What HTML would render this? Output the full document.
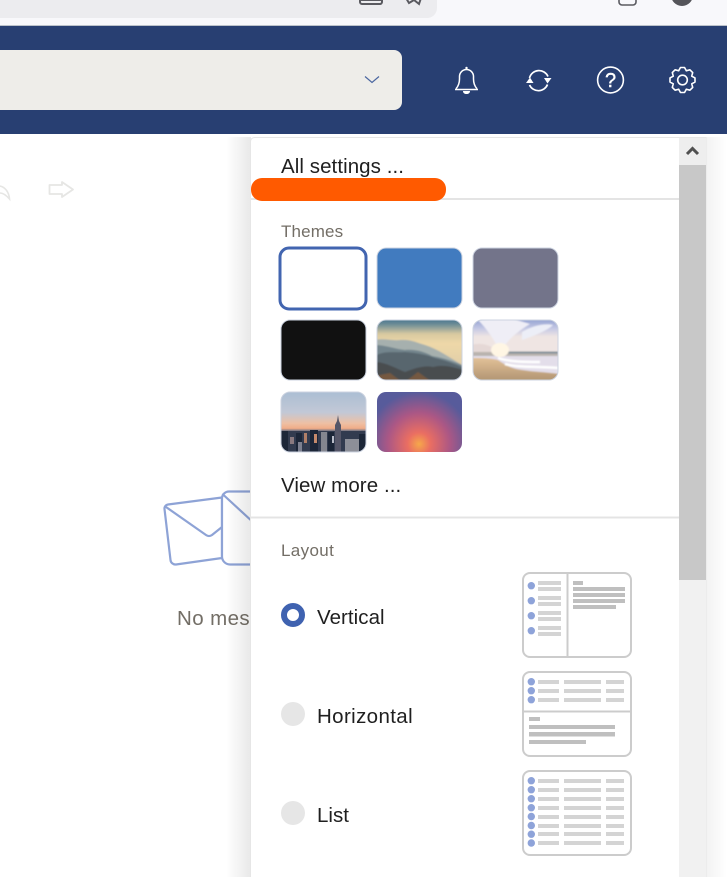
<!DOCTYPE html>
<html lang="en">
<head>
<meta charset="utf-8">
<title>Settings panel</title>
<style>
html,body{margin:0;padding:0;background:#fff;}
body{width:727px;height:877px;position:relative;overflow:hidden;font-family:"Liberation Sans",sans-serif;}
svg.g{position:absolute;left:0;top:0;}
.t{position:absolute;white-space:nowrap;line-height:24px;height:24px;}
.m{font-size:20.5px;color:#1f1f1f;}
.h{font-size:17px;color:#736e66;}
</style>
</head>
<body>
<div class="t" style="left:177px;top:607px;font-size:20.5px;color:#736e66;width:73px;overflow:hidden;letter-spacing:.4px;">No messages</div>
<svg class="g" width="727" height="877" viewBox="0 0 727 877" xmlns="http://www.w3.org/2000/svg">
<defs>
<filter id="b" x="-5%" y="-5%" width="110%" height="110%"><feGaussianBlur stdDeviation=".7"/></filter>
<filter id="s" x="-2%" y="-2%" width="104%" height="104%"><feGaussianBlur stdDeviation=".35"/></filter>
<linearGradient id="shadow" x1="0" x2="1" y1="0" y2="0"><stop offset="0" stop-color="#000" stop-opacity="0"/><stop offset="1" stop-color="#000" stop-opacity=".09"/></linearGradient>
<linearGradient id="shadowR" x1="0" x2="1" y1="0" y2="0"><stop offset="0" stop-color="#000" stop-opacity=".05"/><stop offset="1" stop-color="#000" stop-opacity="0"/></linearGradient>
<linearGradient id="mtn" x1="0" x2="0" y1="0" y2="1"><stop offset="0" stop-color="#3f6f8c"/><stop offset=".1" stop-color="#6d8c96"/><stop offset=".25" stop-color="#d8c9a0"/><stop offset=".4" stop-color="#eed8a8"/><stop offset=".7" stop-color="#e2cfa8"/><stop offset="1" stop-color="#b9bcb0"/></linearGradient>
<linearGradient id="beachSky" x1="0" x2="0" y1="0" y2="1"><stop offset="0" stop-color="#8d9dd0"/><stop offset=".3" stop-color="#c6c9e4"/><stop offset=".52" stop-color="#efe5e3"/></linearGradient>
<linearGradient id="sand" x1="0" x2="0" y1="0" y2="1"><stop offset="0" stop-color="#e6c49a"/><stop offset="1" stop-color="#ae9270"/></linearGradient>
<linearGradient id="city" x1="0" x2="0" y1="0" y2="1"><stop offset="0" stop-color="#a9bdd3"/><stop offset=".35" stop-color="#c2c8d6"/><stop offset=".52" stop-color="#eec0a4"/><stop offset=".6" stop-color="#f0ac88"/><stop offset=".64" stop-color="#6f7486"/><stop offset="1" stop-color="#1d2338"/></linearGradient>
<radialGradient id="glow" gradientUnits="userSpaceOnUse" cx="419" cy="444" r="52"><stop offset="0" stop-color="#f6a84a"/><stop offset=".22" stop-color="#ea6e62"/><stop offset=".6" stop-color="#ab5785"/><stop offset="1" stop-color="#575b9b"/></radialGradient>
<clipPath id="c1"><rect x="377" y="320" width="85" height="60" rx="9"/></clipPath>
<clipPath id="c2"><rect x="473" y="320" width="85" height="60" rx="9"/></clipPath>
<clipPath id="c3"><rect x="281" y="392" width="85" height="60" rx="9"/></clipPath>
</defs>

<!-- browser chrome -->
<rect x="0" y="0" width="727" height="25" fill="#f8f8fb"/>
<rect x="0" y="25" width="727" height="1" fill="#bcc2ca"/>
<path d="M0 0H437V8a10 10 0 0 1-10 10H0z" fill="#ececef"/>
<path d="M360 -3V2a2 2 0 0 0 2 2h18a2 2 0 0 0 2-2V-3M360 0H382" fill="none" stroke="#5a5a60" stroke-width="2"/>
<path d="M406 -2L409 3 L414 0 L419 4 L421 -2" fill="none" stroke="#5a5a60" stroke-width="2"/>
<path d="M619 -3V2a3 3 0 0 0 3 3h11a3 3 0 0 0 3-3V-3" fill="none" stroke="#5a5a60" stroke-width="1.6"/>
<circle cx="682" cy="-5" r="11" fill="#55555a"/>

<!-- header -->
<rect x="0" y="26" width="727" height="108" fill="#283f72"/>
<path d="M0 50H394a8 8 0 0 1 8 8V102a8 8 0 0 1-8 8H0z" fill="#eeede9"/>
<path d="M365 76.500L372 82.500L379 76.500" fill="none" stroke="#4a66a0" stroke-width="1.200"/>

<!-- bell -->
<path d="M456 88.800C458.500 86 459.500 83 459.500 79V76.500a7 7 0 0 1 14 0V79C473.500 83 474.500 86 477 88.800" fill="none" stroke="#fff" stroke-width="1.500" stroke-linejoin="round"/>
<path d="M455 89.500H478" stroke="#fff" stroke-width="1.400"/>
<path d="M463 91h7c0 2-1.500 3-3.500 3s-3.500-1-3.500-3z" fill="#fff"/>
<circle cx="466.500" cy="68" r="1.200" fill="#fff"/>

<!-- refresh -->
<path d="M529.500 78a9.800 9.800 0 0 1 18.500-1.500M547.500 84.500a9.800 9.800 0 0 1-18 .5" fill="none" stroke="#fff" stroke-width="1.700"/>
<path d="M526 83L530 77.500L533.500 83z" fill="#fff"/>
<path d="M544 78L551.500 78L547.500 83.500z" fill="#fff"/>

<!-- help -->
<circle cx="610.500" cy="80" r="12.900" fill="none" stroke="#fff" stroke-width="1.600"/>
<text x="610.500" y="87" font-family="Liberation Sans, sans-serif" font-size="20" fill="#fff" stroke="#fff" stroke-width=".4" text-anchor="middle">?</text>

<!-- gear -->
<g transform="translate(682.500 80)" fill="none" stroke="#fff" stroke-width="1.600" stroke-linejoin="round">
<path d="M-2.030 -12.500L2.030 -12.500L3.830 -9.240L7.400 -10.200L10.200 -7.400L9.240 -3.830L12.500 -2.030L12.500 2.030L9.240 3.830L10.200 7.400L7.400 10.200L3.830 9.240L2.030 12.500L-2.030 12.500L-3.830 9.240L-7.400 10.200L-10.200 7.400L-9.240 3.830L-12.500 2.030L-12.500 -2.030L-9.240 -3.830L-10.200 -7.400L-7.400 -10.200L-3.830 -9.240z"/>
<circle r="4.800"/>
</g>

<!-- toolbar arrows, mostly hidden -->
<path d="M0 186C5 187 9 192 9.500 199C6 195 3 193 0 193" fill="none" stroke="#e6e6e4" stroke-width="1.600"/>
<path d="M49.500 185H62V182L73 189.500L62 197V194H49.500z" fill="none" stroke="#e6e6e4" stroke-width="1.800" stroke-linejoin="round"/>

<!-- envelopes -->
<g fill="none" stroke="#8ea3d6" stroke-width="2.200" stroke-linejoin="round" stroke-linecap="round">
<path d="M168 504.500L222 497.500V558L176 564.500a5 5 0 0 1-5.500-4.500L164.500 509a4 4 0 0 1 3.500-4.500z" fill="#fff"/>
<path d="M166 507L206 535a5 5 0 0 0 6 0L222 527"/>
<path d="M229 491.500H260V564.500H230a8 8 0 0 1-8-8V498.500a7 7 0 0 1 7-7z" fill="#fff"/>
<path d="M223 494.500L255 524"/>
</g>

<!-- panel shadow and body -->
<rect x="226" y="137" width="25" height="740" fill="url(#shadow)"/>
<rect x="706" y="137" width="21" height="740" fill="url(#shadowR)"/>
<path d="M250.500 885V141.500a4 4 0 0 1 4-4H706V885z" fill="#fff" stroke="#e6e6e6"/>

<!-- scrollbar -->
<rect x="679" y="138" width="27" height="739" fill="#f1f1f1"/>
<rect x="679" y="138" width="27" height="27" fill="#eeeeee"/>
<rect x="679" y="165" width="27" height="415" fill="#c8c8c8"/>
<path d="M687 154L692.500 148.500L698 154" fill="none" stroke="#505050" stroke-width="3"/>

<!-- dividers -->
<rect x="251" y="198" width="428" height="2" fill="#e4e4e4"/>
<rect x="251" y="516.500" width="428" height="2" fill="#e4e4e4"/>

<!-- orange marker -->
<rect x="251" y="178" width="195" height="23" rx="11" fill="#ff5a00"/>

<!-- theme tiles row 1 -->
<rect x="280" y="248" width="86" height="61" rx="9" fill="#fff" stroke="#4265b0" stroke-width="3"/>
<rect x="377" y="248" width="85" height="60" rx="9" fill="#417bbf" stroke="#ccd3e0"/>
<rect x="473" y="248" width="85" height="60" rx="9" fill="#73748a" stroke="#ccd3e0"/>

<!-- row 2 -->
<rect x="281" y="320" width="85" height="60" rx="9" fill="#111" stroke="#ccd3e0"/>
<g clip-path="url(#c1)"><g filter="url(#b)">
<rect x="375" y="318" width="89" height="64" fill="url(#mtn)"/>
<path d="M375 340C385 338 392 341 400 340C410 339 418 343 425 345C438 349 450 358 464 366V382H375z" fill="#a6b0ae"/>
<path d="M375 345C385 345 395 349 405 350C415 349 425 352 432 356C445 358 455 362 464 366V382H375z" fill="#73858d"/>
<path d="M375 356C385 350 395 353 405 352C415 353 425 354 435 358C445 360 455 364 464 368V382H375z" fill="#58666e"/>
<path d="M375 362C385 362 395 368 405 372C415 368 425 365 433 367C445 364 455 368 464 370V382H375z" fill="#4a4e50"/>
<path d="M375 376L390 373L402 382H375zM405 382L418 372L432 382z" fill="#75593f"/>
</g></g>
<rect x="377" y="320" width="85" height="60" rx="9" fill="none" stroke="#ccd3e0"/>
<g clip-path="url(#c2)"><g filter="url(#b)">
<rect x="471" y="318" width="89" height="36" fill="url(#beachSky)"/>
<path d="M478 320C490 332 497 345 500 352C506 342 516 332 530 324L510 318z" fill="#efeef6"/>
<path d="M522 332C532 326 544 323 553 325C548 330 536 335 522 340z" fill="#eceef7"/>
<path d="M471 345C482 342 490 345 500 352L471 352z" fill="#e5d8d6"/>
<rect x="471" y="352" width="89" height="5" fill="#b9b3ae"/>
<rect x="505" y="351.500" width="55" height="2" fill="#7f8e98"/>
<rect x="471" y="356" width="89" height="26" fill="url(#sand)"/>
<path d="M473 356H560V374C545 372 535 372 522 370C512 369 505 365 498 360C490 358 480 358 473 358z" fill="#e3deea"/>
<path d="M498 358C510 362 525 362 540 362M505 364C520 368 535 366 558 368" fill="none" stroke="#fff" stroke-width="2.500"/>
<ellipse cx="500" cy="350" rx="9" ry="7" fill="#fff6e4"/>
</g></g>
<rect x="473" y="320" width="85" height="60" rx="9" fill="none" stroke="#ccd3e0"/>

<!-- row 3 -->
<g clip-path="url(#c3)"><g filter="url(#s)">
<rect x="279" y="390" width="89" height="64" fill="url(#city)"/>
<path d="M279 431H368V454H279z" fill="#333a50"/>
<g fill="#1f2538"><rect x="281" y="431" width="7" height="22"/><rect x="296" y="433" width="6" height="20"/><rect x="310" y="430" width="8" height="23"/><rect x="328" y="432" width="6" height="22"/><rect x="359" y="434" width="7" height="20"/></g>
<path d="M335 454V425L337 421L338 415L339 421L341 425V454z" fill="#555768"/>
<rect x="345" y="439" width="14" height="14" fill="#8d8f98"/>
<rect x="321" y="432" width="6" height="21" fill="#84868f"/>
<rect x="304" y="433" width="3" height="10" fill="#b07f68"/>
<rect x="314" y="434" width="3" height="9" fill="#c58a6c"/>
<rect x="290" y="437" width="4" height="7" fill="#8a7a80"/>
<rect x="298" y="442" width="4" height="10" fill="#7d8090"/>
<rect x="332" y="436" width="2" height="7" fill="#b9bcc8"/>
</g></g>
<rect x="281" y="392" width="85" height="60" rx="9" fill="none" stroke="#ccd3e0"/>
<rect x="377" y="392" width="85" height="60" rx="9" fill="url(#glow)"/>

<!-- radios -->
<circle cx="293" cy="615" r="9" fill="#fff" stroke="#3f62b0" stroke-width="6"/>
<circle cx="293" cy="714" r="12" fill="#e6e6e6"/>
<circle cx="293" cy="813" r="12" fill="#e6e6e6"/>

<g filter="url(#s)">
<!-- thumbnail: vertical -->
<rect x="523" y="573" width="108" height="84" rx="7" fill="#fff" stroke="#cccccc" stroke-width="2"/>
<rect x="566.500" y="573" width="2" height="84" fill="#cccccc"/>
<g fill="#8ea3d9"><circle cx="531.300" cy="585.700" r="3.700"/><circle cx="531.300" cy="600.700" r="3.700"/><circle cx="531.300" cy="615.700" r="3.700"/><circle cx="531.300" cy="630.700" r="3.700"/></g>
<g fill="#d4d4d4"><rect x="538" y="581" width="23" height="4"/><rect x="538" y="587" width="23" height="4"/><rect x="538" y="596" width="23" height="4"/><rect x="538" y="602" width="23" height="4"/><rect x="538" y="611" width="23" height="4"/><rect x="538" y="617" width="23" height="4"/><rect x="538" y="626" width="23" height="4"/><rect x="538" y="632" width="23" height="4"/></g>
<g fill="#bfbfbf"><rect x="573" y="581" width="10" height="4"/><rect x="573" y="587" width="52" height="4"/><rect x="573" y="593" width="52" height="4"/><rect x="573" y="599" width="52" height="4"/><rect x="573" y="605" width="43" height="4"/></g>

<!-- thumbnail: horizontal -->
<rect x="523" y="672" width="108" height="84" rx="7" fill="#fff" stroke="#cccccc" stroke-width="2"/>
<rect x="523" y="710.500" width="108" height="2" fill="#cccccc"/>
<g fill="#8ea3d9"><circle cx="531.300" cy="681.700" r="3.700"/><circle cx="531.300" cy="690.700" r="3.700"/><circle cx="531.300" cy="699.700" r="3.700"/></g>
<g fill="#d4d4d4"><rect x="538" y="680" width="21" height="4"/><rect x="564" y="680" width="37" height="4"/><rect x="606" y="680" width="18" height="4"/><rect x="538" y="689" width="21" height="4"/><rect x="564" y="689" width="37" height="4"/><rect x="606" y="689" width="18" height="4"/><rect x="538" y="698" width="21" height="4"/><rect x="564" y="698" width="37" height="4"/><rect x="606" y="698" width="18" height="4"/></g>
<g fill="#bfbfbf"><rect x="529" y="717" width="11" height="4"/><rect x="529" y="725" width="86" height="4"/><rect x="529" y="732" width="86" height="4.500"/><rect x="529" y="740" width="57" height="4"/></g>

<!-- thumbnail: list -->
<rect x="523" y="771" width="108" height="84" rx="7" fill="#fff" stroke="#cccccc" stroke-width="2"/>
<g fill="#8ea3d9"><circle cx="531.300" cy="780.700" r="3.700"/><circle cx="531.300" cy="789.700" r="3.700"/><circle cx="531.300" cy="798.700" r="3.700"/><circle cx="531.300" cy="807.700" r="3.700"/><circle cx="531.300" cy="816.500" r="3.700"/><circle cx="531.300" cy="825.500" r="3.700"/><circle cx="531.300" cy="834.200" r="3.700"/><circle cx="531.300" cy="843" r="3.700"/></g>
<g fill="#d4d4d4">
<rect x="538" y="779" width="21" height="4"/><rect x="564" y="779" width="37" height="4"/><rect x="606" y="779" width="18" height="4"/>
<rect x="538" y="788" width="21" height="4"/><rect x="564" y="788" width="37" height="4"/><rect x="606" y="788" width="18" height="4"/>
<rect x="538" y="797" width="21" height="4"/><rect x="564" y="797" width="37" height="4"/><rect x="606" y="797" width="18" height="4"/>
<rect x="538" y="806" width="21" height="4"/><rect x="564" y="806" width="37" height="4"/><rect x="606" y="806" width="18" height="4"/>
<rect x="538" y="815" width="21" height="4"/><rect x="564" y="815" width="37" height="4"/><rect x="606" y="815" width="18" height="4"/>
<rect x="538" y="824" width="21" height="4"/><rect x="564" y="824" width="37" height="4"/><rect x="606" y="824" width="18" height="4"/>
<rect x="538" y="832" width="21" height="4"/><rect x="564" y="832" width="37" height="4"/><rect x="606" y="832" width="18" height="4"/>
<rect x="538" y="841" width="21" height="4"/><rect x="564" y="841" width="37" height="4"/><rect x="606" y="841" width="18" height="4"/>
</g>
</g>
</svg>

<div class="t m" style="left:281px;top:155px;letter-spacing:.07px;">All settings ...</div>
<div class="t h" style="left:281px;top:220px;letter-spacing:.15px;">Themes</div>
<div class="t m" style="left:281px;top:474px;letter-spacing:.08px;">View more ...</div>
<div class="t h" style="left:281px;top:539px;letter-spacing:.35px;">Layout</div>
<div class="t m" style="left:317px;top:606px;letter-spacing:.05px;">Vertical</div>
<div class="t m" style="left:317px;top:705px;letter-spacing:.37px;">Horizontal</div>
<div class="t m" style="left:317px;top:804px;">List</div>
</body>
</html>
